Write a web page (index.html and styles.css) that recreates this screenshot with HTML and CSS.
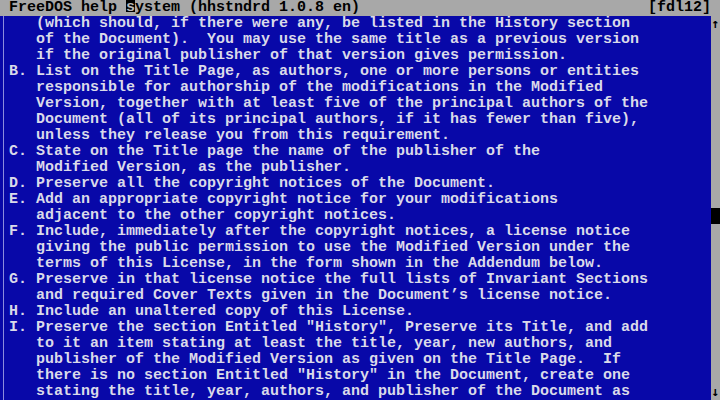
FILE: index.html
```html
<!DOCTYPE html>
<html lang="en">
<head>
    <meta charset="UTF-8">
    <title>FreeDOS help system</title>
    <link rel="stylesheet" href="styles.css">
</head>
<body>
    <div class="screen">
        <header class="title-bar">
            <span class="title">FreeDOS help <span class="cursor">s</span>ystem (hhstndrd 1.0.8 en)</span>
            <span class="page-id">[fdl12]</span>
        </header>
        <div class="body">
<pre class="pane">   (which should, if there were any, be listed in the History section
   of the Document).  You may use the same title as a previous version
   if the original publisher of that version gives permission.
B. List on the Title Page, as authors, one or more persons or entities
   responsible for authorship of the modifications in the Modified
   Version, together with at least five of the principal authors of the
   Document (all of its principal authors, if it has fewer than five),
   unless they release you from this requirement.
C. State on the Title page the name of the publisher of the
   Modified Version, as the publisher.
D. Preserve all the copyright notices of the Document.
E. Add an appropriate copyright notice for your modifications
   adjacent to the other copyright notices.
F. Include, immediately after the copyright notices, a license notice
   giving the public permission to use the Modified Version under the
   terms of this License, in the form shown in the Addendum below.
G. Preserve in that license notice the full lists of Invariant Sections
   and required Cover Texts given in the Document’s license notice.
H. Include an unaltered copy of this License.
I. Preserve the section Entitled "History", Preserve its Title, and add
   to it an item stating at least the title, year, new authors, and
   publisher of the Modified Version as given on the Title Page.  If
   there is no section Entitled "History" in the Document, create one
   stating the title, year, authors, and publisher of the Document as</pre>
            <div class="scrollbar">
                <span class="arrow">↑</span>
                <span class="track"></span>
                <span class="thumb"></span>
                <span class="track"></span>
                <span class="arrow">↓</span>
            </div>
        </div>
    </div>
</body>
</html>
```

FILE: styles.css
```css
body {
    margin: 0;
    background-color: #0808a8;
    font-family: 'Liberation Mono', 'DejaVu Sans Mono', monospace;
    font-size: 15px;
    font-weight: bold;
    line-height: 16px;
}

.screen {
    width: 720px;
    height: 400px;
    display: flex;
    flex-direction: column;
    overflow: hidden;
}

.title-bar {
    height: 16px;
    background-color: #a8a8a8;
    color: #000;
    display: flex;
    justify-content: space-between;
    padding: 0 9px;
    white-space: pre;
}

.cursor {
    background: linear-gradient(#000 0, #000 13px, transparent 13px);
    color: #b8b8b8;
}

.body {
    flex: 1;
    display: flex;
}

.pane {
    margin: 0;
    width: 702px;
    padding-left: 9px;
    font: inherit;
    color: #dadaea;
    background: linear-gradient(to right, transparent 3px, #8c8cdc 3px, #8c8cdc 4px, transparent 4px);
    white-space: pre;
}

/* one cell wide; thumb sits on screen row 13 */
.scrollbar {
    width: 9px;
    background-color: #a8a8a8;
    display: grid;
    grid-template-rows: 16px 176px 16px 1fr 16px;
}

.arrow {
    color: #000;
    font-family: 'DejaVu Sans Mono', monospace;
    font-size: 13px;
    font-weight: bold;
    text-align: center;
}

.thumb {
    background-color: #000;
}
```
